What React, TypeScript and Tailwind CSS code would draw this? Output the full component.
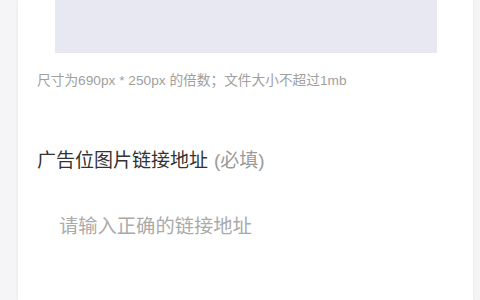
import React from "react";

export default function App() {
  return (
    <div
      className="w-[480px] h-[300px] overflow-hidden bg-[#f5f5f7] flex pl-[18px] pr-[7px]"
      style={{ fontFamily: '"Liberation Sans", "Noto Sans CJK SC", sans-serif' }}
    >
      <div className="flex-1 bg-white shadow-[0_0_3px_rgba(0,0,0,0.08)] flex flex-col pl-[19px]">
        <div className="ml-[18px] w-[382px] h-[53px] bg-[#e8e8f2]" />
        <div className="mt-[19px] h-[18px] leading-[18px] text-[13.7px] text-[#a0a0a0] whitespace-nowrap">
          尺寸为690px * 250px 的倍数；文件大小不超过1mb
        </div>
        <div className="mt-[59px] h-[24px] leading-[24px] text-[19px] text-[#333333] whitespace-nowrap">
          广告位图片链接地址<span className="text-[#9a9a9a] ml-[6px]">(必填)</span>
        </div>
        <div className="mt-[42px] ml-[22px] h-[24px] leading-[24px] text-[19.3px] text-[#aaaaaa] whitespace-nowrap">
          请输入正确的链接地址
        </div>
      </div>
    </div>
  );
}
